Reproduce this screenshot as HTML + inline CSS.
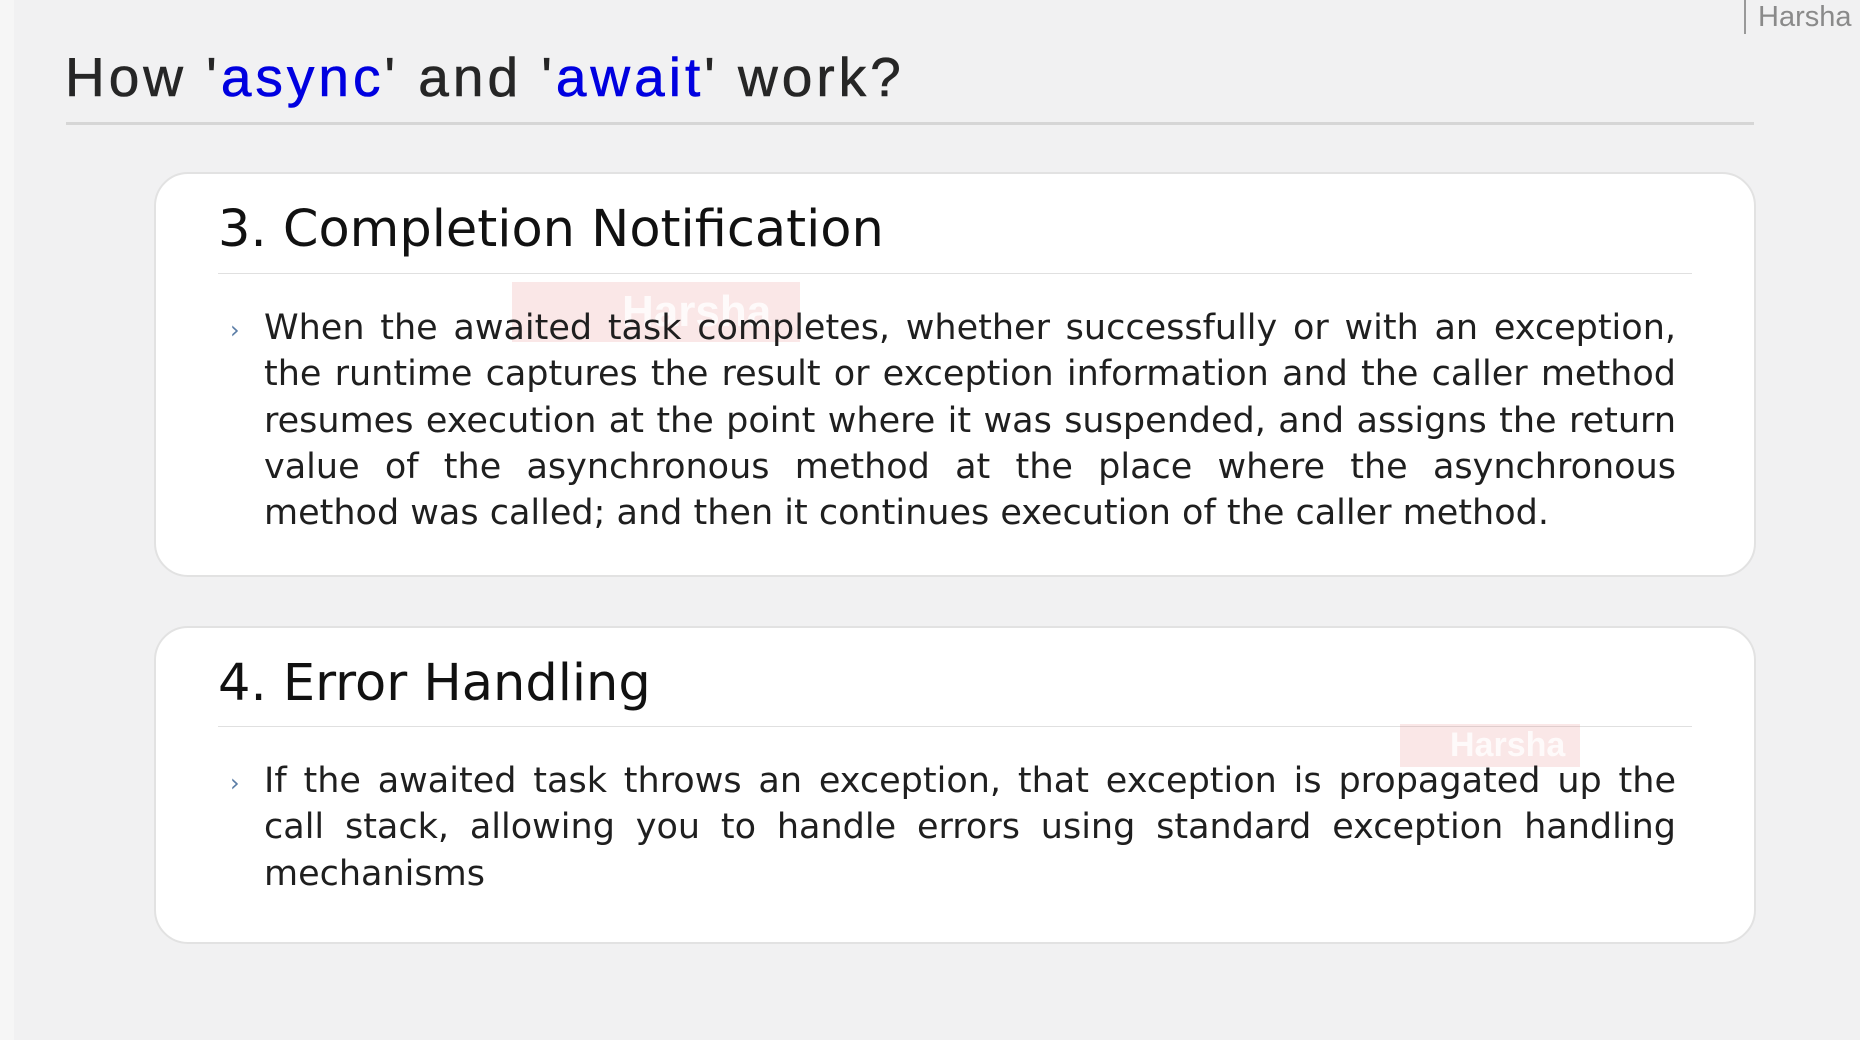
<!DOCTYPE html>
<html><head><meta charset="utf-8"><style>
html,body{margin:0;padding:0}
body{width:1860px;height:1040px;background:#f1f1f2;position:relative;overflow:hidden;font-family:"DejaVu Sans",sans-serif;color:#1a1a1a}
.strip{position:absolute;left:0;top:0;width:14px;height:1040px;background:#f6f6f6}
.title{position:absolute;left:65px;top:42px;font-family:"Liberation Sans",sans-serif;font-size:55px;letter-spacing:4px;color:#262626;white-space:nowrap;line-height:70px;-webkit-text-stroke:0.6px #262626}
.title b{font-weight:normal;color:#0000e0;-webkit-text-stroke:0.6px #0000e0}
.hr{position:absolute;left:66px;top:122px;width:1688px;height:3px;background:#d6d6d6}
.brand{position:absolute;left:1744px;top:0;height:34px;border-left:2px solid #999;padding-left:12px;font-family:"Liberation Sans",sans-serif;font-size:29px;color:#8a8a8a;line-height:34px}
.card{position:absolute;left:154px;width:1598px;background:#fff;border:2px solid #e2e2e2;border-radius:34px}
.card h2{position:absolute;left:62px;margin:0;font-weight:normal;font-size:51px;color:#111;white-space:nowrap;line-height:60px}
.card .div{position:absolute;left:62px;width:1474px;height:1px;background:#e0e0e0}
.card .ch{position:absolute;left:74px;font-size:24px;color:#5b7da6}
.txt{position:absolute;left:108px;width:1412px;font-size:35px;line-height:46.3px;color:#1f1f1f}
.txt div{text-align:justify;text-align-last:justify;white-space:nowrap}
.txt div.l{text-align-last:left}
.wm{position:absolute;background:rgba(230,120,120,.18);color:rgba(255,255,255,.8);font-family:"Liberation Sans",sans-serif;font-weight:bold}
</style></head><body>
<div class="strip"></div>
<div class="title">How '<b>async</b>' and '<b>await</b>' work?</div>
<div class="hr"></div>
<div class="brand">Harsha</div>

<div class="card" style="top:172px;height:401px">
  <h2 style="top:26px">3. Completion Notification</h2>
  <div class="div" style="top:99px"></div>
  <div class="wm" style="left:356px;top:108px;width:288px;height:60px;font-size:44px;line-height:60px;text-indent:110px">Harsha</div>
  <div class="ch" style="top:142px">›</div>
  <div class="txt" style="top:131px">
    <div>When the awaited task completes, whether successfully or with an exception,</div>
    <div>the runtime captures the result or exception information and the caller method</div>
    <div>resumes execution at the point where it was suspended, and assigns the return</div>
    <div>value of the asynchronous method at the place where the asynchronous</div>
    <div class="l">method was called; and then it continues execution of the caller method.</div>
  </div>
</div>

<div class="card" style="top:626px;height:314px">
  <h2 style="top:26px">4. Error Handling</h2>
  <div class="div" style="top:98px"></div>
  <div class="wm" style="left:1244px;top:96px;width:180px;height:43px;font-size:34px;line-height:43px;text-indent:50px">Harsha</div>
  <div class="ch" style="top:141px">›</div>
  <div class="txt" style="top:130px">
    <div>If the awaited task throws an exception, that exception is propagated up the</div>
    <div>call stack, allowing you to handle errors using standard exception handling</div>
    <div class="l">mechanisms</div>
  </div>
</div>
</body></html>
